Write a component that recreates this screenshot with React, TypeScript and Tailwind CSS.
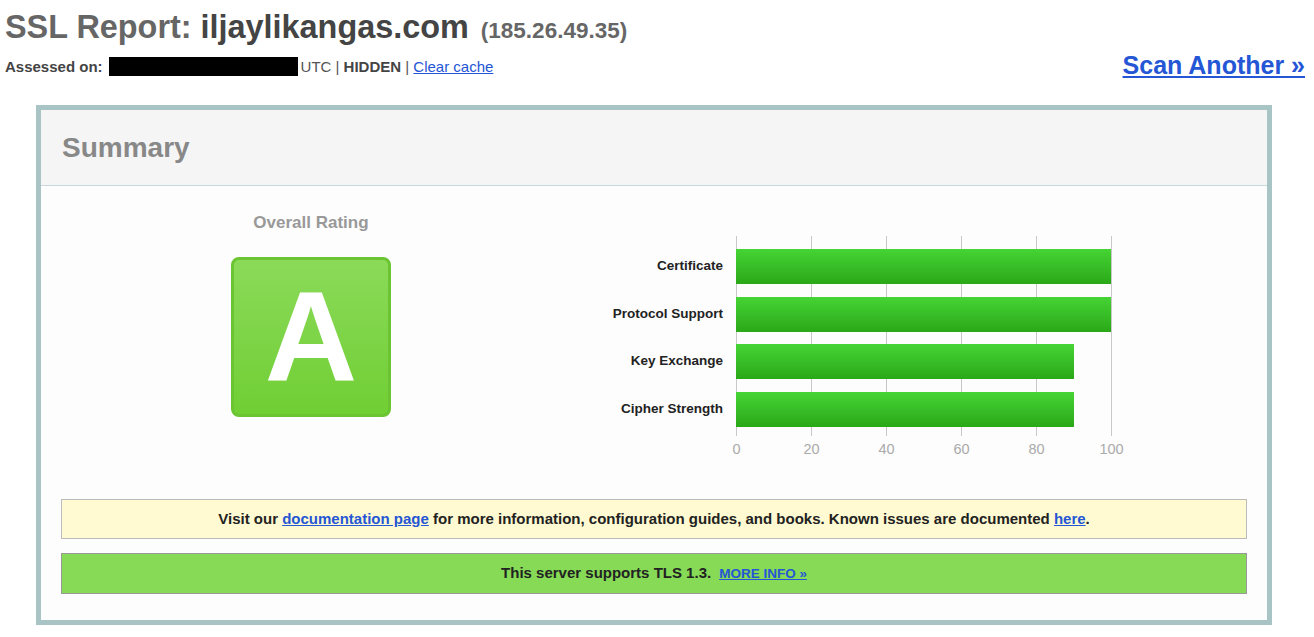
import type { ReactNode } from "react";

const bars = [
	{ label: "Certificate", value: 100 },
	{ label: "Protocol Support", value: 100 },
	{ label: "Key Exchange", value: 90 },
	{ label: "Cipher Strength", value: 90 },
];

const ticks = [0, 20, 40, 60, 80, 100];

function Link({ children, className }: { children: ReactNode; className?: string }) {
	return <a className={`text-[#2456d5] underline ${className ?? ""}`}>{children}</a>;
}

function RatingChart() {
	return (
		<div className="flex">
			<div className="w-[155px] pr-[13px] pt-[13px] flex flex-col gap-[12.5px]">
				{bars.map((b) => (
					<div
						key={b.label}
						className="h-[35px] flex items-center justify-end text-[13.5px] font-bold text-[#222] whitespace-nowrap"
					>
						{b.label}
					</div>
				))}
			</div>
			<div className="relative w-[375px]">
				{ticks.map((t) => (
					<div
						key={t}
						className="absolute top-0 h-[200px] w-px bg-[#c8c8c8]"
						style={{ left: t * 3.75 }}
					/>
				))}
				<div className="relative pt-[13px] flex flex-col gap-[12.5px] h-[200px]">
					{bars.map((b) => (
						<div
							key={b.label}
							className="h-[35px] bg-linear-to-b from-[#46d435] to-[#2aa817]"
							style={{ width: b.value * 3.75 }}
						/>
					))}
				</div>
				<div className="relative h-[24px]">
					{ticks.map((t) => (
						<span
							key={t}
							className="absolute top-[4px] -translate-x-1/2 text-[14.5px] leading-[18px] text-[#aaa]"
							style={{ left: t * 3.75 + 0.5 }}
						>
							{t}
						</span>
					))}
				</div>
			</div>
		</div>
	);
}

export default function App() {
	return (
		<div className="min-h-[637px] w-full bg-white font-['Liberation_Sans',Arial,sans-serif] text-[#444]">
			<header className="pl-[5px] pr-[9px] pt-[11px]">
				<h1 className="flex items-baseline gap-[12px] h-[32px] leading-[32px] font-bold">
					<span className="text-[32.4px]">
						<span className="text-[#666]">SSL Report: </span>
						<span className="text-[#444]">iljaylikangas.com</span>
					</span>
					<span className="text-[22.5px] leading-none text-[#666]">(185.26.49.35)</span>
				</h1>
				<div className="mt-[8px] flex items-end justify-between">
					<div className="pb-[2px] text-[15px] leading-[20px] text-[#555]">
						<span className="font-bold text-[#444]">Assessed on:</span>
						<span className="ml-[6px] inline-block h-[19px] w-[189px] bg-black align-[-4px]" />
						<span className="ml-[3px]">UTC | </span>
						<span className="font-bold text-[#444]">HIDDEN</span>
						<span> | </span>
						<Link>Clear cache</Link>
					</div>
					<Link className="text-[25px] leading-[28px] font-bold">Scan Another »</Link>
				</div>
			</header>

			<section className="ml-[36px] mt-[26px] w-[1236px] border-[5px] border-[#a9c4c5]">
				<div className="h-[76px] bg-[#f5f5f5] border-b border-[#c9d8d8] pl-[21px] pt-[22px]">
					<h2 className="text-[28px] leading-[32px] font-bold text-[#888]">Summary</h2>
				</div>
				<div className="bg-[#fdfdfd] px-[20px] pb-[26px]">
					<div className="h-[313px] -mx-[20px] flex items-start">
						<div className="w-[540px] pt-[27px] flex flex-col items-center">
							<div className="text-[17px] leading-[20px] font-bold text-[#999]">Overall Rating</div>
							<div className="mt-[24px] w-[160px] h-[160px] rounded-[8px] border-[3px] border-[#6bc532] bg-linear-to-b from-[#8bda58] to-[#70cf33] flex items-center justify-center">
								<span className="text-[128px] leading-none font-bold text-white">A</span>
							</div>
						</div>
						<div className="pt-[50px]">
							<RatingChart />
						</div>
					</div>
					<div className="flex flex-col gap-[14px]">
						<div className="h-[40px] border border-[#bbb] bg-[#fffad1] flex items-center justify-center text-[15px] font-bold text-[#222]">
							<span>
								Visit our <Link>documentation page</Link> for more information, configuration guides, and
								books. Known issues are documented <Link>here</Link>.
							</span>
						</div>
						<div className="h-[41px] border border-[#999] bg-[#86da56] flex items-center justify-center text-[15px] font-bold text-[#222]">
							<span>
								This server supports TLS 1.3.
								<Link className="ml-[8px] text-[13.5px]">MORE INFO »</Link>
							</span>
						</div>
					</div>
				</div>
			</section>
		</div>
	);
}
